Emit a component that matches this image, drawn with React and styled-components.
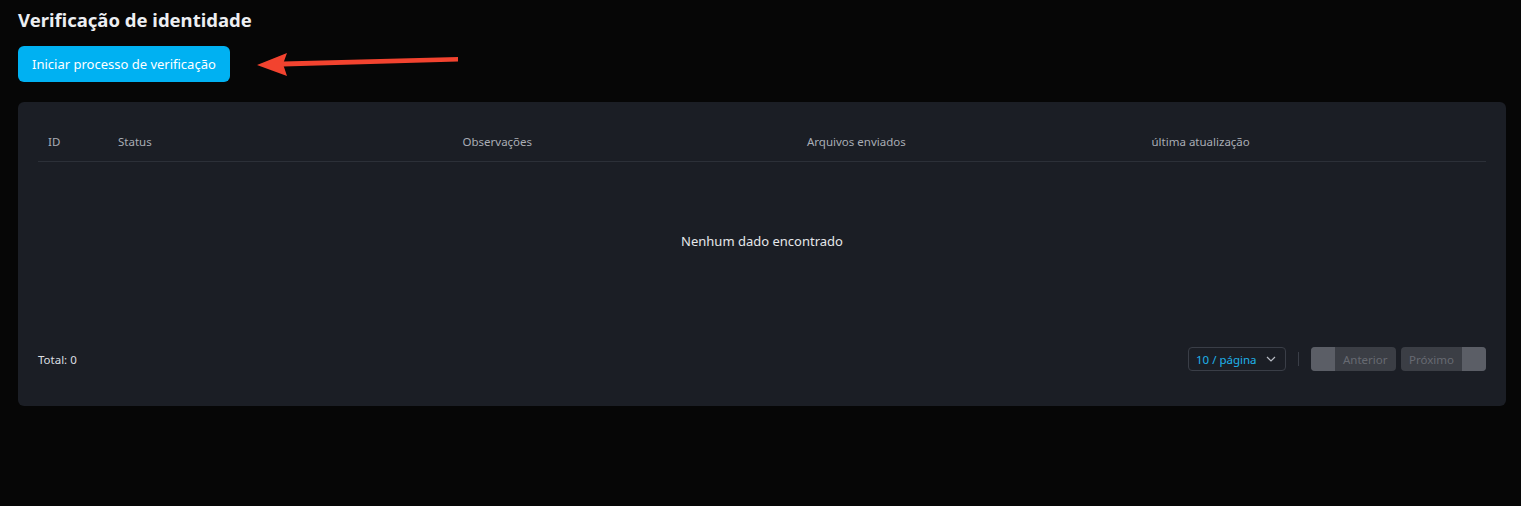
import React from 'react'
import styled, { createGlobalStyle } from 'styled-components'

const GlobalStyle = createGlobalStyle`
  body {
    margin: 0;
    background: #060606;
    font-family: "Noto Sans", Lato, sans-serif;
    color: #e6e7ea;
  }
`

const columns = ['ID', 'Status', 'Observações', 'Arquivos enviados', 'última atualização']

function App() {
  return (
    <Page>
      <GlobalStyle />
      <Title>Verificação de identidade</Title>
      <ActionRow>
        <PrimaryButton>Iniciar processo de verificação</PrimaryButton>
        <Arrow width="202" height="30" viewBox="0 0 202 30">
          <path d="M201 9 L26 13.5 L26 18.5 L201 13.5 Z" fill="#f2432f" />
          <path d="M0 17 L30 5 L26 16 L30 28 Z" fill="#f2432f" />
        </Arrow>
      </ActionRow>
      <Card>
        <HeadRow>
          {columns.map((c) => (
            <HeadCell key={c}>{c}</HeadCell>
          ))}
        </HeadRow>
        <Empty>Nenhum dado encontrado</Empty>
        <Footer>
          <Total>Total: 0</Total>
          <Pager>
            <PageSize>
              10 / página
              <svg width="12" height="12" viewBox="0 0 12 12">
                <path d="M2 4 L6 8 L10 4" fill="none" stroke="#b8bcc4" strokeWidth="1.2" />
              </svg>
            </PageSize>
            <Sep />
            <NavButton $side="left"><NavEdge />Anterior</NavButton>
            <NavButton $side="right">Próximo<NavEdge /></NavButton>
          </Pager>
        </Footer>
      </Card>
    </Page>
  )
}

const Page = styled.div`
  padding: 8px 15px 0 18px;
`

const Title = styled.h1`
  margin: 0;
  font-size: 18.5px;
  font-weight: 700;
  line-height: 24px;
  color: #eceef2;
`

const ActionRow = styled.div`
  display: flex;
  align-items: center;
  margin-top: 14px;
  gap: 27px;
`

const PrimaryButton = styled.button`
  height: 36px;
  padding: 0 14px;
  border: none;
  border-radius: 6px;
  background: #00b1f2;
  color: #fff;
  font-family: inherit;
  font-size: 13px;
  font-weight: 400;
`

const Arrow = styled.svg`
  display: block;
  margin-top: -3px;
`

const Card = styled.div`
  margin-top: 20px;
  background: #1b1e25;
  border-radius: 6px;
  padding: 20px 20px 35px;
  height: 304px;
  box-sizing: border-box;
  display: flex;
  flex-direction: column;
`

const HeadRow = styled.div`
  display: grid;
  grid-template-columns: 70px repeat(4, 1fr);
  border-bottom: 1px solid #2c3038;
  height: 39px;
  align-items: center;
`

const HeadCell = styled.div`
  padding-left: 10px;
  font-size: 11.5px;
  color: #a9adb5;
`

const Empty = styled.div`
  text-align: center;
  font-size: 13px;
  color: #e6e7ea;
  margin-top: 70px;
`

const Footer = styled.div`
  margin-top: auto;
  display: flex;
  align-items: center;
  justify-content: space-between;
  height: 24px;
`

const Total = styled.div`
  font-size: 11.5px;
  color: #dcdee2;
`

const Pager = styled.div`
  display: flex;
  align-items: center;
  gap: 5px;
`

const PageSize = styled.div`
  box-sizing: border-box;
  width: 98px;
  height: 24px;
  border: 1px solid #3a3e47;
  border-radius: 4px;
  display: flex;
  align-items: center;
  justify-content: space-between;
  padding: 0 8px 0 7px;
  font-size: 11.5px;
  color: #1fb2ea;
`

const Sep = styled.div`
  width: 1px;
  height: 14px;
  background: #3a3e47;
  margin: 0 7px 0 7px;
`

const NavButton = styled.div`
  width: 85px;
  height: 24px;
  border-radius: 4px;
  overflow: hidden;
  background: #3b3e45;
  display: flex;
  align-items: center;
  gap: 8px;
  font-size: 11.5px;
  color: #676a72;
  justify-content: ${(p) => (p.$side === 'left' ? 'flex-start' : 'flex-end')};
  padding: ${(p) => (p.$side === 'left' ? '0' : '0 0 0 8px')};
  box-sizing: border-box;
`

const NavEdge = styled.span`
  width: 24px;
  height: 100%;
  background: #5b5e66;
  flex-shrink: 0;
`

export default App
